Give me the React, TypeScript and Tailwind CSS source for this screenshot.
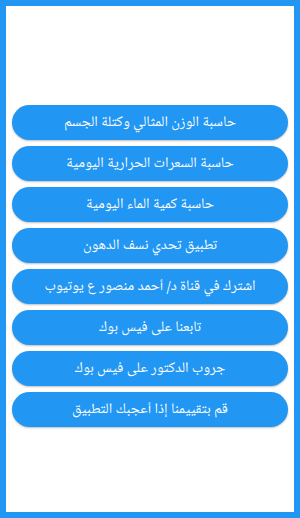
import React from "react";

const items = [
  "حاسبة الوزن المثالي وكتلة الجسم",
  "حاسبة السعرات الحرارية اليومية",
  "حاسبة كمية الماء اليومية",
  "تطبيق تحدي نسف الدهون",
  "اشترك في قناة د/ أحمد منصور ع يوتيوب",
  "تابعنا على فيس بوك",
  "جروب الدكتور على فيس بوك",
  "قم بتقييمنا إذا أعجبك التطبيق",
];

export default function App() {
  return (
    <div
      dir="rtl"
      className="w-[300px] h-[518px] border-[6px] border-[#2196F3] bg-white flex flex-col px-[6px] pt-[99px] gap-[6px] font-['Noto_Naskh_Arabic_UI','Noto_Naskh_Arabic','DejaVu_Sans',sans-serif]"
    >
      {items.map((t) => (
        <button
          key={t}
          className="w-full h-[35px] shrink-0 rounded-full bg-[#2196F3] text-white text-[14.7px] leading-none font-normal flex items-center justify-center shadow-[0_1px_2px_rgba(0,0,0,0.25)]"
        >
          {t}
        </button>
      ))}
    </div>
  );
}
